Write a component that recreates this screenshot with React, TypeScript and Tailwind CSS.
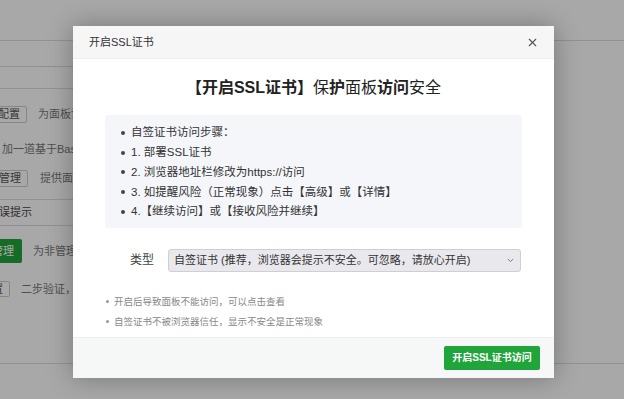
import { X, ChevronDown } from "lucide-react";

const STEPS = [
  "自签证书访问步骤：",
  "1. 部署SSL证书",
  "2. 浏览器地址栏修改为https://访问",
  "3. 如提醒风险（正常现象）点击【高级】或【详情】",
  "4.【继续访问】或【接收风险并继续】",
];

const NOTES = ["开启后导致面板不能访问，可以点击查看", "自签证书不被浏览器信任，显示不安全是正常现象"];

export default function App() {
  return (
    <div className="relative w-[624px] h-[399px] overflow-hidden bg-white text-[#777] font-['Liberation_Sans','Noto_Sans_CJK_SC',sans-serif]">
      {/* Page behind the dialog */}
      <div className="flex flex-col">
        <div className="h-[41px] border-b border-[#ddd]" />
        <div className="h-[26px] w-[300px] border-b border-[#ddd]" />
        <div className="h-[22px] w-[300px] border-b border-[#ddd]" />
        <div className="mt-[17px] flex items-center gap-[11px] text-[11px] -ml-[31px]">
          <span className="h-[17px] px-[6px] flex items-center border border-[#ccc] rounded-[2px] text-[#555]">启用配置</span>
          <span>为面板设置访问限制</span>
        </div>
        <div className="mt-[18px] text-[11px] leading-[16px] pl-[2px]">加一道基于BasicAuth的验证</div>
        <div className="mt-[13px] flex items-center gap-[12px] text-[11px] -ml-[30px]">
          <span className="h-[17px] px-[6px] flex items-center border border-[#ccc] rounded-[2px] text-[#555]">启用管理</span>
          <span>提供面板管理</span>
        </div>
        <div className="mt-[12px] w-[300px] border-t border-[#ddd] h-[27px] border-b flex items-center text-[11px] text-[#444] -ml-[12px]">
          错误提示
        </div>
        <div className="mt-[13px] flex items-center gap-[11px] text-[11px] -ml-[38px]">
          <span className="h-[24px] px-[8px] flex items-center bg-[#20a53a] rounded-[2px] text-white">开启管理</span>
          <span>为非管理员设置</span>
        </div>
        <div className="mt-[18px] flex items-center gap-[11px] text-[11px] -ml-[26px]">
          <span className="h-[16px] px-[6px] flex items-center border border-[#ccc] rounded-[2px] text-[#555]">设置</span>
          <span>二步验证，加强安全</span>
        </div>
        <div className="mt-[65px] border-t border-[#ddd]" />
      </div>

      {/* Dim overlay */}
      <div className="absolute inset-0 bg-black/[0.34]" />

      {/* Dialog */}
      <div className="absolute left-[73px] top-[26px] w-[481px] bg-white flex flex-col shadow-[0_0_24px_rgba(0,0,0,0.3)] text-[#333]">
        <div className="h-[33px] bg-[#f6f6f6] border-b border-[#eee] flex items-center justify-between pl-[16px] pr-[15px]">
          <span className="text-[11px]">开启SSL证书</span>
          <X size={13} strokeWidth={2} className="text-[#555]" />
        </div>

        <h2 className="mt-[17px] text-center text-[16px] leading-[24px] text-[#222]">
          <span className="font-semibold">【开启SSL证书】</span>保<span className="font-semibold">护</span>面板
          <span className="font-semibold">访问</span>安全
        </h2>

        <ul className="mt-[15px] mx-[32px] bg-[#f5f6fa] rounded-[3px] pt-[8px] pb-[6px] pl-[16px]">
          {STEPS.map((s) => (
            <li key={s} className="flex items-center gap-[6px] h-[19.8px] text-[11.5px] text-[#333]">
              <span className="w-[4px] h-[4px] rounded-full bg-[#444]" />
              {s}
            </li>
          ))}
        </ul>

        <div className="mt-[21px] flex items-center pl-[57px] pr-[33px]">
          <span className="w-[38px] text-[12px] text-[#444]">类型</span>
          <div className="flex-1 h-[23px] bg-[#e9e9ed] border border-[#cfcfd3] rounded-[3px] flex items-center justify-between pl-[5px] pr-[5px] text-[11px] text-[#333]">
            <span>自签证书 (推荐，浏览器会提示不安全。可忽略，请放心开启)</span>
            <ChevronDown size={9} strokeWidth={2} className="text-[#555]" />
          </div>
        </div>

        <ul className="mt-[20px] pl-[33px]">
          {NOTES.map((n) => (
            <li key={n} className="flex items-center gap-[5px] h-[20px] text-[9.5px] text-[#888]">
              <span className="w-[3px] h-[3px] rounded-full bg-[#999]" />
              {n}
            </li>
          ))}
        </ul>

        <div className="mt-[5px] h-[41px] bg-[#f6f8f8] border-t border-[#eee] flex items-center justify-end pr-[14px]">
          <button className="w-[96px] h-[24px] bg-[#20a53a] rounded-[2px] text-white text-[10px] font-bold">
            开启SSL证书访问
          </button>
        </div>
      </div>
    </div>
  );
}
